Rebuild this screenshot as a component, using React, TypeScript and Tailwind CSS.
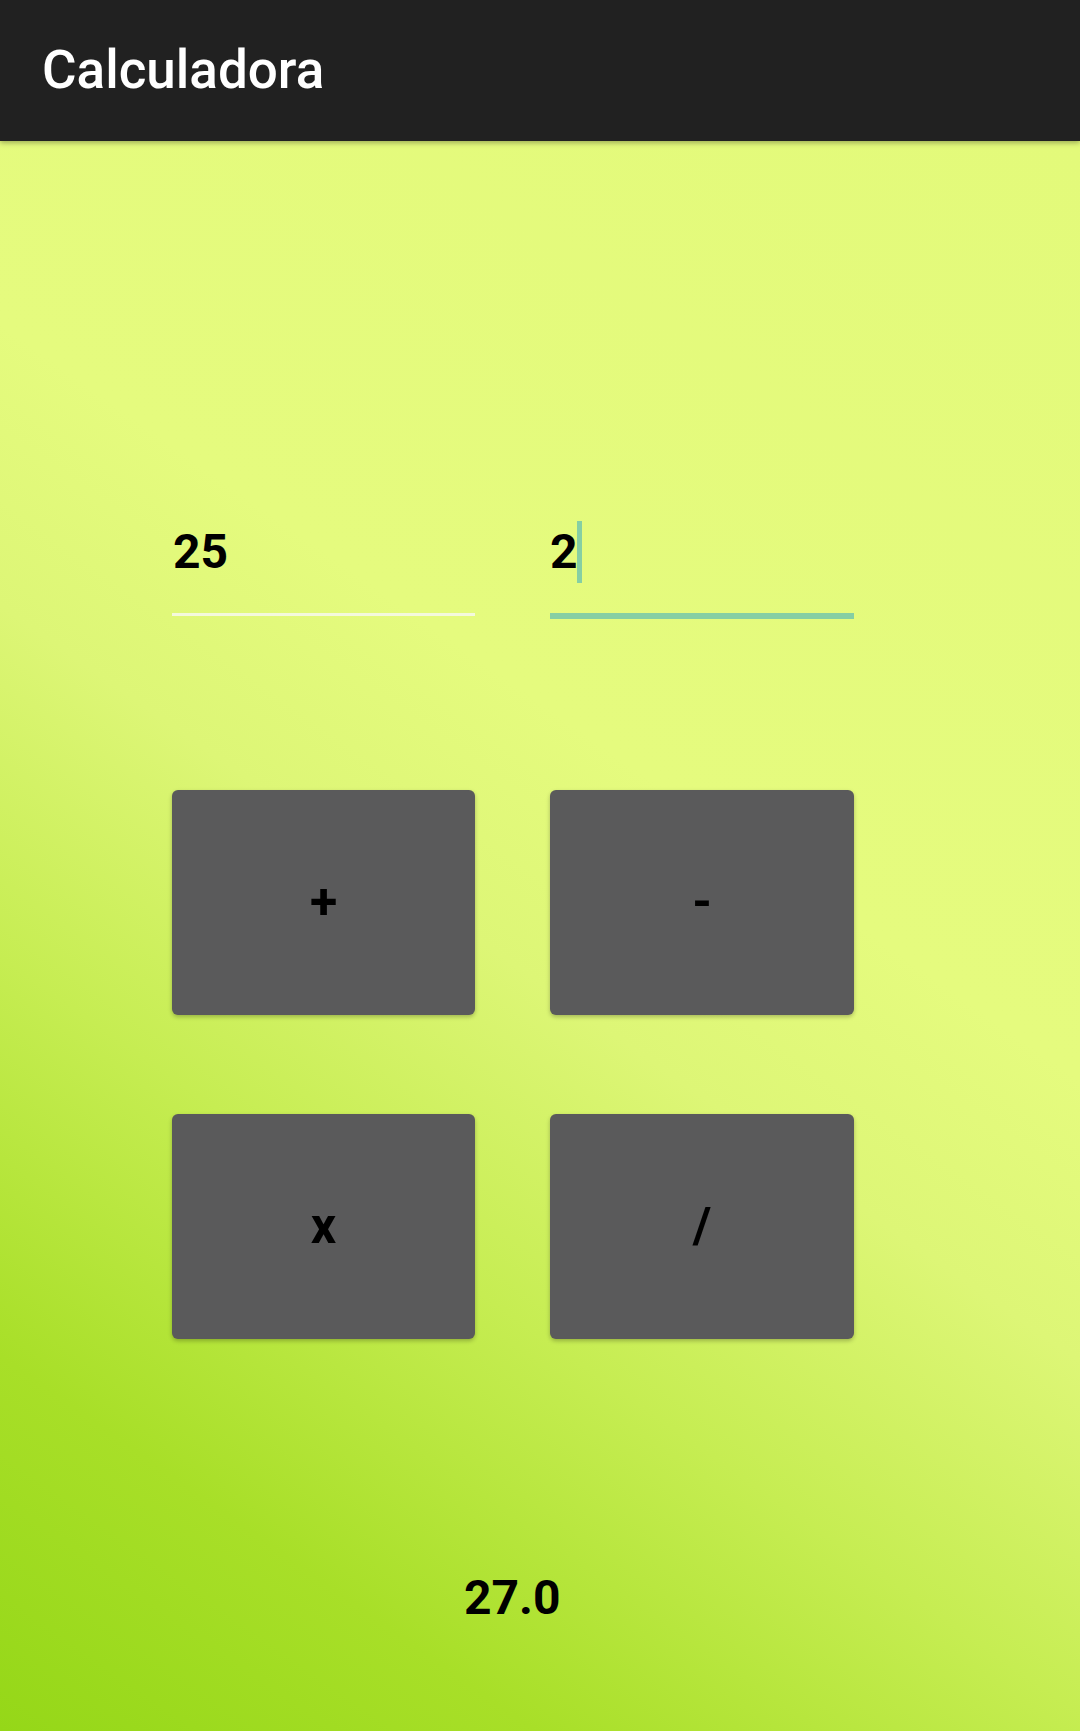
import React from "react";

export default function App() {
  return (
    <div className="w-[1080px] h-[1731px] flex flex-col overflow-hidden font-['Roboto','Liberation_Sans',sans-serif]">
      <div className="relative z-10 h-[141px] shrink-0 bg-[#212121] flex items-center pl-[42px] shadow-[0_2px_5px_rgba(0,0,0,0.3)]">
        <span className="text-white text-[53px] font-medium leading-none">Calculadora</span>
      </div>
      <div className="flex-1 flex flex-col bg-[linear-gradient(35deg,#95d718_0%,#a8df28_16%,#c6ed52_33%,#ddf676_48%,#e5fb7e_60%,#e3fa7a_100%)] pl-[172px]">
        <div className="flex gap-[75px] items-start mt-[382px]">
          <div className="w-[303px] flex flex-col">
            <div className="h-[58px] flex items-center text-[48px] font-bold text-black pl-[1px]">25</div>
            <div className="mt-[32px] h-[3px] bg-[#f4f9dc]" />
          </div>
          <div className="w-[304px] flex flex-col">
            <div className="h-[58px] flex items-center text-[48px] font-bold text-black">
              <span>2</span>
              <span className="w-[5px] h-[62px] shrink-0 bg-[#86cfa3] -ml-[1px]" />
            </div>
            <div className="mt-[32px] h-[6px] bg-[#86cfa3]" />
          </div>
        </div>
        <div className="grid grid-cols-[303px_304px] gap-x-[75px] gap-y-[99px] mt-[171px]">
          {["+", "-", "x", "/"].map((s) => (
            <div
              key={s}
              className="h-[225px] rounded-[6px] bg-[#5a5a5b] shadow-[0_2px_4px_rgba(0,0,0,0.25)] flex items-center justify-center text-[50px] font-bold text-black"
            >
              {s}
            </div>
          ))}
        </div>
        <div className="mt-[230px] pl-[292px] text-[48px] leading-[58px] font-bold text-black">27.0</div>
      </div>
    </div>
  );
}
